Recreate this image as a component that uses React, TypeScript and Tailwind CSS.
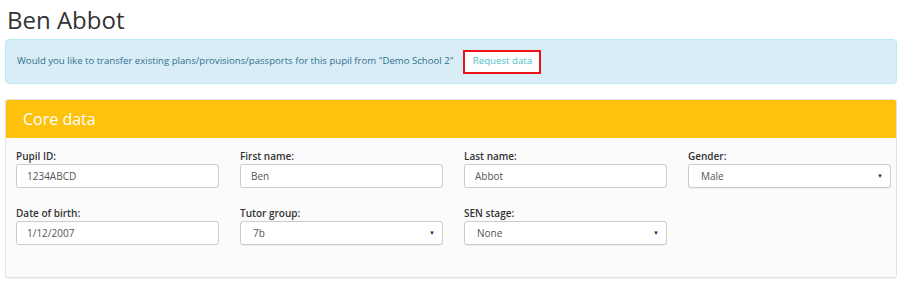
import React from "react";

const fields = [
  { label: "Pupil ID:", value: "1234ABCD", select: false },
  { label: "First name:", value: "Ben", select: false },
  { label: "Last name:", value: "Abbot", select: false },
  { label: "Gender:", value: "Male", select: true },
  { label: "Date of birth:", value: "1/12/2007", select: false },
  { label: "Tutor group:", value: "7b", select: true },
  { label: "SEN stage:", value: "None", select: true },
];

function Field({ label, value, select }: { label: string; value: string; select: boolean }) {
  return (
    <div>
      <div className="h-[16px] text-[10px] leading-[16px] font-semibold text-[#333]">{label}</div>
      <div
        className={`flex items-center justify-between h-[24px] border border-[#ccc] rounded-[3px] bg-white pr-[7px] text-[10px] text-[#555] ${select ? "pl-[12px] shadow-[0_1px_1px_rgba(0,0,0,0.06)]" : "pl-[10px]"}`}
      >
        <span>{value}</span>
        {select && <span className="text-[6px] text-[#333]">▼</span>}
      </div>
    </div>
  );
}

export default function App() {
  return (
    <div className="w-[902px] h-[302px] bg-white px-[5px] pt-[4px] font-['Open_Sans',sans-serif]">
      <h1 className="text-[24px] leading-[32px] text-[#333] pl-[2px]">Ben Abbot</h1>

      {/* Transfer alert */}
      <div className="mt-[3px] w-[892px] h-[45px] flex items-center gap-[10px] bg-[#d9edf7] border border-[#bce8f1] rounded-[4px] pl-[11px]">
        <span className="text-[9.6px] text-[#31708f]">
          Would you like to transfer existing plans/provisions/passports for this pupil from "Demo School 2"
        </span>
        <span className="flex items-center justify-center w-[78px] h-[24px] border-2 border-[#e8141a] bg-white text-[9.7px] text-[#4fbdc8]">
          Request data
        </span>
      </div>

      {/* Core data panel */}
      <div className="mt-[15px] w-[892px] border border-[#e2e2e2] rounded-[3px] bg-[#fbfbfb] shadow-[0_1px_1px_rgba(0,0,0,0.05)]">
        <div className="h-[38px] bg-[#fec10c] flex items-center pl-[17px] text-[16px] text-white rounded-t-[2px]">
          Core data
        </div>
        <div className="grid grid-cols-[203px_203px_203px_203px] gap-x-[21px] gap-y-[17px] pl-[10px] pt-[10px] pb-[32px]">
          {fields.map((f) => (
            <Field key={f.label} {...f} />
          ))}
        </div>
      </div>
    </div>
  );
}
